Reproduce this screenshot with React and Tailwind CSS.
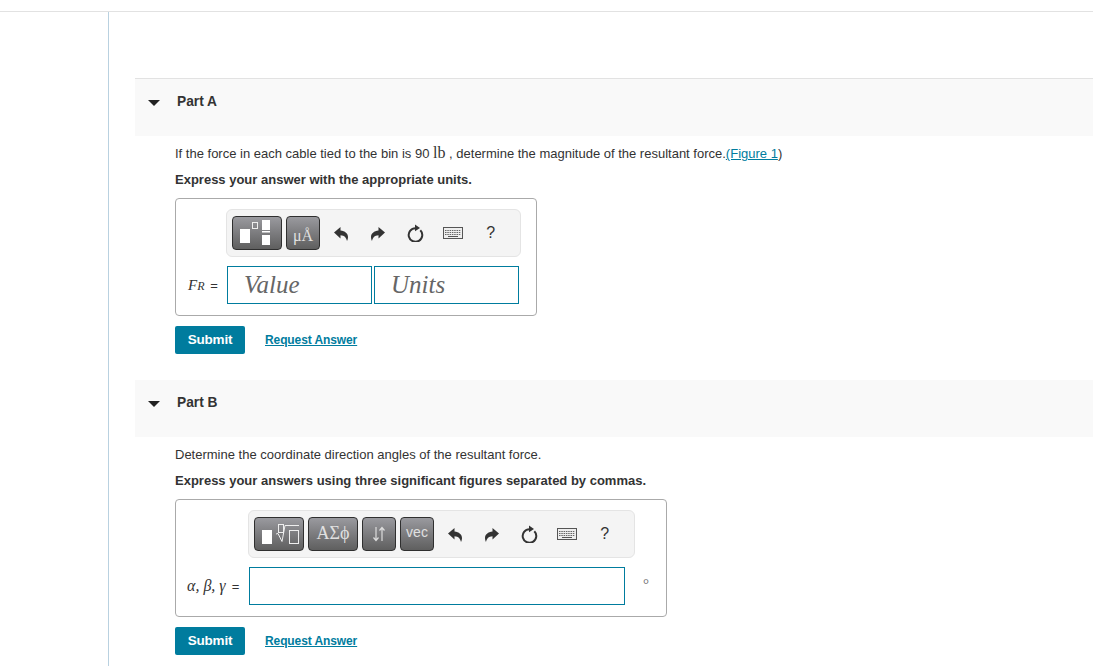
import React from "react";

const btn =
  "flex h-[34px] items-center justify-center rounded-[4px] border border-[#2f2f2f] bg-gradient-to-b from-[#9a9a9f] to-[#5f5f5f] text-[#e0e0e0]";

const cell = "flex h-[20px] w-[37.5px] shrink-0 items-center justify-center";

const ToolIcons = () => (
  <div className="ml-[2px] flex items-center">
    {/* undo */}
    <div className={cell}>
      <svg width="14" height="15" viewBox="0 0 14 15">
        <path d="M0 6.500 6.500 1v3.500C11 5 14 7.500 14 11c0 1.500-.5 3-1 4-.5-3-2.500-5.800-6.500-5.800V12.500z" fill="#333" />
      </svg>
    </div>
    {/* redo */}
    <div className={cell}>
      <svg width="14" height="15" viewBox="0 0 14 15">
        <path d="M14 6.500 7.500 1v3.500C3 5 0 7.500 0 11c0 1.500.5 3 1 4 .5-3 2.500-5.800 6.500-5.800V12.500z" fill="#333" />
      </svg>
    </div>
    {/* reset */}
    <div className={cell}>
      <svg width="17" height="18" viewBox="0 0 17 18">
        <path d="M13.300 6.200A6.800 6.800 0 1 1 8.500 4.200" fill="none" stroke="#333" strokeWidth="2" />
        <path d="M8 0.500 13 3.900 8 7.300z" fill="#333" />
      </svg>
    </div>
    {/* keyboard */}
    <div className={cell}>
      <svg width="20" height="12" viewBox="0 0 20 12">
        <rect x="0.500" y="0.500" width="19" height="11" fill="#eee" stroke="#555" />
        <path d="M2 3.500h16M2 5.500h16M2 7.500h16" stroke="#666" strokeWidth="1" strokeDasharray="1.500 0.800" />
        <path d="M5 9.500h10" stroke="#555" strokeWidth="1" />
      </svg>
    </div>
    <div className={`${cell} text-[16px] leading-none text-[#333]`}>?</div>
  </div>
);

const Submit = () => (
  <div className="flex items-center">
    <button className="h-[28px] w-[70px] rounded-[2px] bg-[#007c9e] pt-[1px] text-[13.5px] font-bold tracking-[-0.2px] text-white">
      Submit
    </button>
    <a className="ml-[20px] text-[12px] font-bold tracking-[-0.1px] text-[#007c9e] underline">Request Answer</a>
  </div>
);

const PartHeader = ({ title, className }) => (
  <div className={`flex items-center bg-[#f9f9f9] pb-[10px] ${className}`}>
    <svg width="12" height="6" viewBox="0 0 12 6" className="ml-[13px]">
      <path d="M0 0h12L6 6z" fill="#222" />
    </svg>
    <span className="ml-[17px] text-[13.75px] font-bold text-[#333]">{title}</span>
  </div>
);

const App = () => {
  return (
    <div className="h-[666px] w-[1093px] overflow-hidden bg-white font-['Liberation_Sans',Arial,sans-serif] text-[#333]">
      <div className="mt-[11px] flex h-[655px] border-t border-[#e2e2e2]">
        <div className="w-[109px] shrink-0 border-r border-[#b9d1e0]"></div>
        <div className="min-w-0 flex-1 pl-[26px] pt-[66px]">
          {/* Part A */}
          <PartHeader title="Part A" className="h-[58px] border-t border-[#e2e2e2]" />
          <div className="pl-[40px]">
            <p className="mt-[9px] h-[16px] text-[13px] leading-[16px] whitespace-nowrap">
              If the force in each cable tied to the bin is 90{" "}
              <span className="font-['Liberation_Serif',serif] text-[16px]">lb</span> , determine the magnitude of the
              resultant force.<a className="text-[#007c9e] underline">(Figure 1</a>)
            </p>
            <p className="mt-[11px] h-[16px] text-[13px] font-bold leading-[16px]">
              Express your answer with the appropriate units.
            </p>
            <div className="mt-[10px] h-[118px] w-[362px] rounded-[4px] border border-[#aaa] pl-[12px] pt-[10px]">
              <div className="ml-[38px] flex h-[48px] w-[295px] items-center rounded-[6px] border border-[#e4e4e4] bg-[#f4f4f4] pl-[5px]">
                <div className={`${btn} w-[50px]`}>
                  <svg width="34" height="28" viewBox="0 0 34 28">
                    <rect x="0" y="10" width="10" height="14" fill="#fff" />
                    <rect x="12.500" y="3.500" width="5" height="6" fill="none" stroke="#eee" />
                    <rect x="22" y="1" width="8" height="10" fill="#fff" />
                    <rect x="22" y="12" width="8" height="1.500" fill="#fff" />
                    <rect x="22" y="16" width="8" height="10" fill="#fff" />
                  </svg>
                </div>
                <div className={`${btn} ml-[4px] w-[34px] pt-[5px] font-['Liberation_Serif',serif] text-[16px]`}>μÅ</div>
                <ToolIcons />
              </div>
              <div className="mt-[9px] flex h-[38px] items-center">
                <span className="w-[39px] whitespace-nowrap font-['Liberation_Serif',serif] text-[15px] italic">
                  F<span className="text-[12px]">R</span>{" "}
                  <span className="ml-[2px] font-['Liberation_Sans',sans-serif] text-[13px] not-italic">=</span>
                </span>
                <div className="flex h-[38px] w-[145px] items-center border border-[#007c9e] pl-[16px] font-['Liberation_Serif',serif] text-[25px] italic text-[#666]">
                  Value
                </div>
                <div className="ml-[2px] flex h-[38px] w-[145px] items-center border border-[#007c9e] pl-[16px] font-['Liberation_Serif',serif] text-[25px] italic text-[#666]">
                  Units
                </div>
              </div>
            </div>
            <div className="mt-[10px]">
              <Submit />
            </div>
          </div>

          {/* Part B */}
          <PartHeader title="Part B" className="mt-[26px] h-[57px]" />
          <div className="pl-[40px]">
            <p className="mt-[10px] h-[16px] text-[13px] leading-[16px]">
              Determine the coordinate direction angles of the resultant force.
            </p>
            <p className="mt-[10px] h-[16px] text-[13px] font-bold leading-[16px]">
              Express your answers using three significant figures separated by commas.
            </p>
            <div className="mt-[10px] h-[118px] w-[492px] rounded-[4px] border border-[#aaa] pl-[11px] pt-[10px]">
              <div className="ml-[61px] flex h-[48px] w-[387px] items-center rounded-[6px] border border-[#e4e4e4] bg-[#f4f4f4] pl-[5px]">
                <div className={`${btn} w-[50px]`}>
                  <svg width="44" height="28" viewBox="0 0 44 28">
                    <rect x="5" y="10" width="10" height="14" fill="#fff" />
                    <rect x="21.500" y="4.500" width="5" height="8" fill="none" stroke="#eee" />
                    <path d="M19 14l2-.5 4 8L28 5.500h14" fill="none" stroke="#eee" />
                    <rect x="32.500" y="10.500" width="9" height="13" fill="none" stroke="#eee" />
                  </svg>
                </div>
                <div className={`${btn} ml-[4px] w-[50px] pb-[1px] font-['Liberation_Serif',serif] text-[18px]`}>ΑΣϕ</div>
                <div className={`${btn} ml-[4px] w-[34px]`}>
                  <svg width="14" height="16" viewBox="0 0 14 16">
                    <path d="M4 1v13M1.500 11.500 4 14.500l2.500-3M10 15V2M7.500 4.500 10 1.500l2.500 3" fill="none" stroke="#ddd" strokeWidth="1.200" />
                  </svg>
                </div>
                <div className={`${btn} ml-[4px] w-[34px] pb-[3px] text-[14px]`}>vec</div>
                <ToolIcons />
              </div>
              <div className="mt-[9px] flex h-[38px] items-center">
                <span className="w-[62px] whitespace-nowrap font-['Liberation_Serif',serif] text-[16px] italic">
                  α, β, γ <span className="ml-[2px] font-['Liberation_Sans',sans-serif] text-[13px] not-italic">=</span>
                </span>
                <div className="h-[38px] w-[376px] border border-[#007c9e]"></div>
                <span className="mb-[4px] ml-[18px] font-['Liberation_Serif',serif] text-[15px] leading-none text-[#666]">°</span>
              </div>
            </div>
            <div className="mt-[10px]">
              <Submit />
            </div>
          </div>
        </div>
      </div>
    </div>
  );
};

export default App;
